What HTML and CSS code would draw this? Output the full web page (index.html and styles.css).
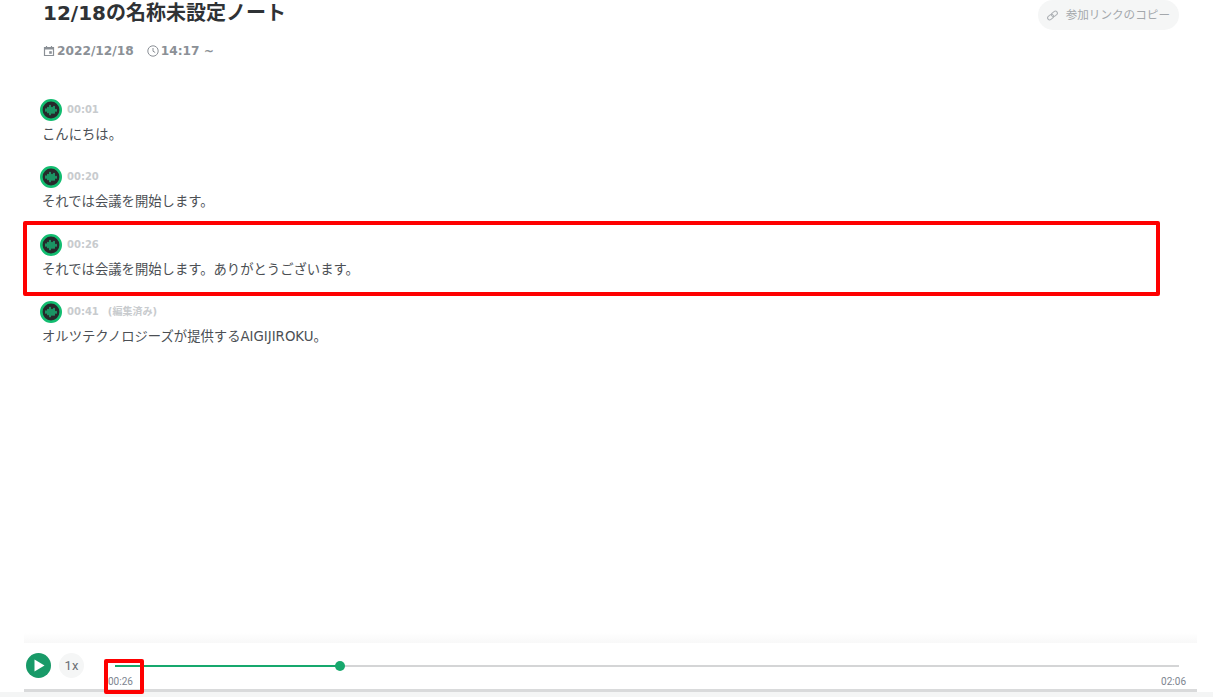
FILE: index.html
```html
<!DOCTYPE html>
<html lang="ja">
<head>
<meta charset="utf-8">
<title>12/18の名称未設定ノート</title>
<link rel="stylesheet" href="styles.css">
</head>
<body>
<div class="page">
  <header class="head">
    <div class="head-main">
      <h1 class="title">12/18の名称未設定ノート</h1>
      <div class="meta">
        <span class="meta-item">
          <svg class="meta-icon" viewBox="0 0 12 12"><path d="M1.5 2.5h9v8h-9z" fill="none" stroke="#8b9096" stroke-width="1.2"/><path d="M1.5 2.5h9v2h-9z" fill="#8b9096"/><path d="M3.5 1v2M8.5 1v2" stroke="#8b9096" stroke-width="1.2"/><rect x="6.2" y="6.2" width="2.6" height="2.6" fill="#8b9096"/></svg>
          2022/12/18
        </span>
        <span class="meta-item">
          <svg class="meta-icon" viewBox="0 0 12 12"><circle cx="6" cy="6" r="5.2" fill="none" stroke="#8b9096" stroke-width="1"/><path d="M6 3v3.2l2.2 1.3" fill="none" stroke="#8b9096" stroke-width="1"/></svg>
          14:17 ~
        </span>
      </div>
    </div>
    <button class="copy">
      <svg class="copy-icon" viewBox="0 0 14 14"><g fill="none" stroke="#aeb2b6" stroke-width="1.1" transform="rotate(-40 7 7)"><rect x="0.8" y="4.8" width="7" height="4.4" rx="2.2"/><rect x="6.2" y="4.8" width="7" height="4.4" rx="2.2"/></g></svg>
      参加リンクのコピー
    </button>
  </header>

  <main class="list">
    <section class="entry">
      <div class="entry-head">
        <svg class="avatar" viewBox="0 0 22 22"><circle cx="11" cy="11" r="9.7" fill="#26292b" stroke="#12bd70" stroke-width="2.6"/><path d="M6 10.2v1.8M8 8.5v5M10 6.5v9M12 8.5v5.5M14 7.5v6.5M16 10.5v1.5" stroke="#1aa86e" stroke-width="1.7" stroke-linecap="round"/></svg>
        <span class="time">00:01</span>
      </div>
      <p class="text">こんにちは。</p>
    </section>
    <section class="entry">
      <div class="entry-head">
        <svg class="avatar" viewBox="0 0 22 22"><circle cx="11" cy="11" r="9.7" fill="#26292b" stroke="#12bd70" stroke-width="2.6"/><path d="M6 10.2v1.8M8 8.5v5M10 6.5v9M12 8.5v5.5M14 7.5v6.5M16 10.5v1.5" stroke="#1aa86e" stroke-width="1.7" stroke-linecap="round"/></svg>
        <span class="time">00:20</span>
      </div>
      <p class="text">それでは会議を開始します。</p>
    </section>
    <section class="entry">
      <div class="entry-head">
        <svg class="avatar" viewBox="0 0 22 22"><circle cx="11" cy="11" r="9.7" fill="#26292b" stroke="#12bd70" stroke-width="2.6"/><path d="M6 10.2v1.8M8 8.5v5M10 6.5v9M12 8.5v5.5M14 7.5v6.5M16 10.5v1.5" stroke="#1aa86e" stroke-width="1.7" stroke-linecap="round"/></svg>
        <span class="time">00:26</span>
      </div>
      <p class="text">それでは会議を開始します。ありがとうございます。</p>
    </section>
    <section class="entry">
      <div class="entry-head">
        <svg class="avatar" viewBox="0 0 22 22"><circle cx="11" cy="11" r="9.7" fill="#26292b" stroke="#12bd70" stroke-width="2.6"/><path d="M6 10.2v1.8M8 8.5v5M10 6.5v9M12 8.5v5.5M14 7.5v6.5M16 10.5v1.5" stroke="#1aa86e" stroke-width="1.7" stroke-linecap="round"/></svg>
        <span class="time">00:41</span>
        <span class="edited">(編集済み)</span>
      </div>
      <p class="text">オルツテクノロジーズが提供するAIGIJIROKU。</p>
    </section>
  </main>

  <footer class="player">
    <button class="play"><svg viewBox="0 0 25 25" class="play-icon"><circle cx="12.5" cy="12.5" r="12.5" fill="#189a68"/><path d="M8.5 6.5v12l10-6z" fill="#fff"/></svg></button>
    <button class="speed">1x</button>
    <div class="seek">
      <div class="track"><div class="fill"></div><div class="knob"></div></div>
      <div class="times"><span>00:26</span><span>02:06</span></div>
    </div>
  </footer>
  <div class="base"></div>
</div>
<div class="mark mark-row"></div>
<div class="mark mark-time"></div>
</body>
</html>
```
FILE: styles.css
```css
* { box-sizing: border-box; }
html, body { margin: 0; height: 697px; overflow: hidden; background: #fff; }
body {
  position: relative;
  font-family: "DejaVu Sans", "Noto Sans CJK JP", sans-serif;
  color: #4b4f54;
}
.page { height: 697px; display: flex; flex-direction: column; }
.head {
  display: flex;
  justify-content: space-between;
  align-items: flex-start;
  padding: 0 34px 0 43px;
  height: 99px;
}
.title {
  margin: 0;
  font-size: 20px;
  line-height: 26px;
  font-weight: 700;
  color: #2f3235;
}
.meta { display: flex; gap: 13px; margin-top: 16px; font-size: 12.2px; line-height: 18px; font-weight: 700; color: #8b9096; }
.meta-item { display: flex; align-items: center; gap: 2px; }
.meta-icon { width: 12px; height: 12px; }
.copy {
  display: flex;
  align-items: center;
  gap: 7px;
  height: 30px;
  padding: 0 9px 2px 8px;
  border: 0;
  border-radius: 15px;
  background: #f5f6f6;
  color: #a4a8ac;
  font: 400 11.6px "DejaVu Sans", "Noto Sans CJK JP", sans-serif;
}
.copy-icon { width: 13px; height: 13px; margin-top: 2px; }
.list { flex: 1; padding-left: 40px; }
.entry { height: 67.33px; }
.entry-head { display: flex; align-items: center; height: 22px; }
.avatar { width: 22px; height: 22px; flex: none; }
.time { margin-left: 5px; font-size: 10px; line-height: 20px; font-weight: 700; color: #c8cbce; }
.edited { margin-left: 9px; font-size: 10px; line-height: 20px; font-weight: 700; color: #c8cbce; }
.text { margin: 4px 0 0 2px; font-size: 13.33px; line-height: 19px; color: #4b4f54; }
.player {
  position: relative;
  display: flex;
  align-items: flex-start;
  margin: 0 16px 0 24px;
  height: 49px;
  padding: 10px 0 0 2px;
  background: #fff;
  border-bottom: 3px solid #d9dadb;
}
.player::before {
  content: "";
  position: absolute;
  left: 0;
  right: 0;
  top: -10px;
  height: 10px;
  background: linear-gradient(to bottom, #fff, #f8f8f8);
}
.base { height: 5px; background: #f4f5f5; }
.play, .speed { padding: 0; border: 0; }
.play { width: 25px; height: 25px; background: none; }
.play-icon { display: block; width: 25px; height: 25px; }
.speed {
  width: 25px;
  height: 25px;
  margin-left: 8px;
  border-radius: 50%;
  background: #f5f6f6;
  color: #6b6f74;
  font: 400 13px Roboto, sans-serif;
}
.seek { flex: none; width: 1078px; margin-left: 24px; }
.track { position: relative; height: 2px; margin: 12px 7px 0 7px; background: #d4d5d6; }
.fill { width: 225px; height: 2px; background: #17a86d; }
.knob {
  position: absolute;
  left: 220px;
  top: -4px;
  width: 10px;
  height: 10px;
  border-radius: 50%;
  background: #17a86d;
}
.times {
  display: flex;
  justify-content: space-between;
  margin-top: 8px;
  font: 400 10px/14px Roboto, sans-serif;
  color: #7d8590;
}
.mark { position: absolute; border: 4px solid #fe0000; border-radius: 2px; pointer-events: none; }
.mark-row { left: 23px; top: 221px; width: 1137px; height: 75px; }
.mark-time { left: 104px; top: 659px; width: 40px; height: 35px; }
```
